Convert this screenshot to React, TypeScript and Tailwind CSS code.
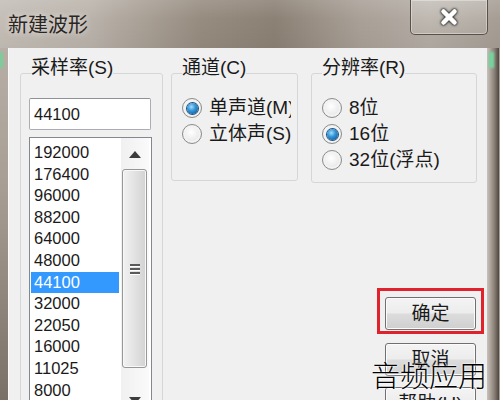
import { X } from "lucide-react";

const RATES = [
  "192000",
  "176400",
  "96000",
  "88200",
  "64000",
  "48000",
  "44100",
  "32000",
  "22050",
  "16000",
  "11025",
  "8000",
];

function Radio({ checked = false }: { checked?: boolean }) {
  return (
    <span className="flex h-[20px] w-[20px] shrink-0 items-center justify-center rounded-full border border-[#8a8b8c] bg-[radial-gradient(circle_at_45%_40%,#ffffff_0%,#ececec_55%,#cdcdcd_100%)] shadow-[inset_0_0_0_2px_#f3f3f3]">
      {checked && (
        <span className="h-[11px] w-[11px] rounded-full bg-[radial-gradient(circle_at_40%_35%,#a6ddff_0%,#3596d8_40%,#0b4a86_100%)] shadow-[0_0_0_1px_#1d4f7d]" />
      )}
    </span>
  );
}

function RadioRow({ label, checked }: { label: string; checked?: boolean }) {
  return (
    <div className="flex h-[26px] min-w-0 items-center gap-[7px]">
      <Radio checked={checked} />
      <span className="min-w-0 overflow-hidden whitespace-nowrap text-[19px] leading-[26px]">{label}</span>
    </div>
  );
}

function Button({ label }: { label: string }) {
  return (
    <div className="flex h-[33px] w-[91px] items-center justify-center rounded-[3px] border border-[#707070] bg-[linear-gradient(#f4f4f4_0%,#ececec_48%,#dcdcdc_52%,#cfcfcf_100%)] text-[19px] leading-[20px] shadow-[inset_0_0_0_1px_#fbfbfb]">
      {label}
    </div>
  );
}

export default function App() {
  return (
    <div className="relative flex h-[400px] w-[500px] flex-col overflow-hidden bg-[linear-gradient(to_right,#c4beb7_0%,#bab3ab_18%,#978c80_40%,#8c8175_55%,#a9a097_72%,#b4ada5_86%,#a69e95_100%)] font-['Liberation_Sans','Noto_Sans_CJK_SC',sans-serif] text-[#1a1a1a]">
      {/* title bar */}
      <div className="flex h-[48px] shrink-0 items-start bg-[linear-gradient(rgba(255,255,255,0.12),rgba(255,255,255,0)_40%,rgba(0,0,0,0.04))]">
        <span className="ml-[8px] mt-[12px] text-[20px] leading-[26px] text-[#2a2522] [text-shadow:0_0_6px_rgba(255,255,255,0.7)]">
          新建波形
        </span>
        <div className="ml-auto mr-[12px] flex h-[35px] w-[78px] items-center justify-center rounded-b-[5px] border border-t-0 border-[#5a5048] bg-[linear-gradient(rgba(255,255,255,0.22),rgba(255,255,255,0.08))] shadow-[inset_0_0_0_1px_rgba(255,255,255,0.35)]">
          <X size={22} strokeWidth={5} className="text-white [filter:drop-shadow(0_0_1px_#333)_drop-shadow(0_0_1px_#333)]" />
        </div>
      </div>

      <div className="flex min-h-0 flex-1">
        {/* left frame */}
        <div className="flex w-[9px] shrink-0 flex-col border-r border-[#7d746b] bg-[linear-gradient(#b7afa6,#a79d93_40%,#7b7066_100%)]">
          <div className="mt-[4px] h-[16px] w-[3px] bg-[#6fd39a] blur-[1px]" />
        </div>

        {/* client */}
        <div className="-ml-px flex w-[479px] shrink-0 items-start overflow-hidden border-l border-[#fafafa] bg-[#f0f0f0]">
          <fieldset className="ml-[11px] mt-[10px] w-[143px] min-w-0 shrink-0 rounded-[3px] border border-[#d3d7da]">
            <legend className="ml-[10px] pb-[10px] text-[19px] leading-[20px]">采样率(S)</legend>
            <div className="pl-[8px] pt-[10px]">
              <div className="h-[32px] w-[122px] rounded-[2px] border border-[#abadb3] border-t-[#8e9198] bg-white pl-[4px] text-[16.5px] leading-[30px]">
                44100
              </div>
              <div className="mt-[7px] flex h-[300px] w-[123px] border border-[#828790] bg-white px-[1px]">
                <div className="w-[88px] pt-[4px]">
                  {RATES.map((rate) => (
                    <div
                      key={rate}
                      className={
                        rate === "44100"
                          ? "h-[21.6px] bg-[#3399ff] pl-[3px] text-[16.5px] leading-[21.6px] text-white"
                          : "h-[21.6px] pl-[3px] text-[16.5px] leading-[21.6px]"
                      }
                    >
                      {rate}
                    </div>
                  ))}
                </div>
                <div className="ml-[2px] flex w-[28px] flex-col bg-[linear-gradient(to_right,#f0f0f0,#fafafa)]">
                  <div className="flex h-[31px] items-center justify-center pt-[1px]">
                    <svg width="12" height="7" viewBox="0 0 12 7">
                      <path d="M6 0 L12 7 L0 7 Z" fill="#3c3c3c" />
                    </svg>
                  </div>
                  <div className="ml-[1px] flex h-[199px] w-[25px] flex-col items-center justify-center gap-[2px] rounded-[3px] border border-[#979797] bg-[linear-gradient(to_right,#f2f2f2,#e4e4e4_45%,#d2d2d2)] shadow-[inset_0_0_0_1px_#f8f8f8]">
                    <div className="h-[2px] w-[10px] bg-[#5a5a5a] shadow-[0_1px_0_#fff]" />
                    <div className="h-[2px] w-[10px] bg-[#5a5a5a] shadow-[0_1px_0_#fff]" />
                    <div className="h-[2px] w-[10px] bg-[#5a5a5a] shadow-[0_1px_0_#fff]" />
                  </div>
                  <div className="flex h-[40px] items-start justify-center pt-[29px]">
                    <svg width="12" height="7" viewBox="0 0 12 7">
                      <path d="M0 0 L12 0 L6 7 Z" fill="#3c3c3c" />
                    </svg>
                  </div>
                </div>
              </div>
            </div>
          </fieldset>

          <div className="ml-[8px] mt-[10px] flex min-w-0 flex-1 flex-col">
            <div className="flex items-start gap-[13px]">
              <fieldset className="w-[127px] min-w-0 shrink-0 rounded-[3px] border border-[#d3d7da]">
                <legend className="ml-[10px] pb-[10px] text-[19px] leading-[20px]">通道(C)</legend>
                <div className="h-[92px] overflow-hidden pl-[10px] pr-[6px] pt-[7px]">
                  <RadioRow label="单声道(M)" checked />
                  <RadioRow label="立体声(S)" />
                </div>
              </fieldset>
              <fieldset className="w-[166px] min-w-0 shrink-0 rounded-[3px] border border-[#d3d7da]">
                <legend className="ml-[10px] pb-[10px] text-[19px] leading-[20px]">分辨率(R)</legend>
                <div className="h-[94px] pl-[10px] pt-[7px]">
                  <RadioRow label="8位" />
                  <RadioRow label="16位" checked />
                  <RadioRow label="32位(浮点)" />
                </div>
              </fieldset>
            </div>

            <div className="mr-[11px] mt-[114px] flex flex-col items-end">
              <div className="relative">
                <Button label="确定" />
                <div className="absolute -bottom-[4px] -left-[8px] -right-[8px] -top-[9px] border-[3px] border-[#e0222c]" />
              </div>
              <div className="mt-[13px]">
                <Button label="取消" />
              </div>
              <div className="mt-[11px]">
                <Button label="帮助(H)" />
              </div>
            </div>
          </div>
        </div>

        {/* right frame */}
        <div className="flex w-[12px] shrink-0 flex-col bg-[linear-gradient(to_right,#c9c2bb_0%,#a69d94_35%,#857b72_65%,#4d453f_100%)]">
          <div className="ml-[2px] mt-[4px] h-[16px] w-[5px] bg-[#72d69c] blur-[1px]" />
        </div>
      </div>

      {/* watermark */}
      <span className="absolute left-[371px] top-[361px] text-[29px] font-light leading-[32px] text-black [text-shadow:0_0_2px_#fff,0_0_2px_#fff]">
        音频应用
      </span>
    </div>
  );
}
